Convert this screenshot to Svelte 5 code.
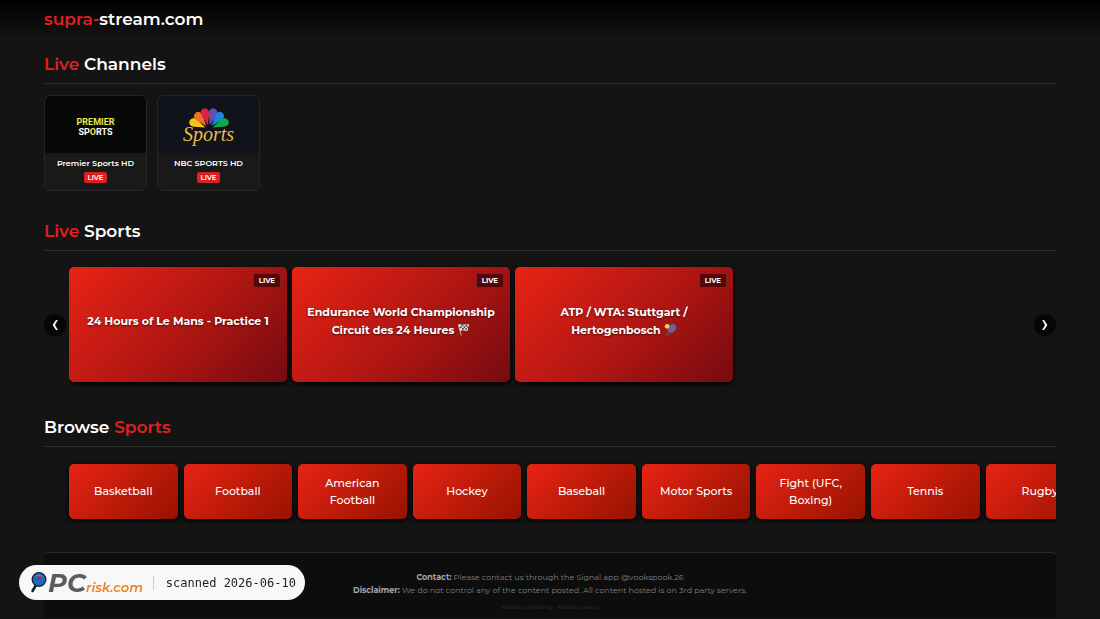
<script>
  const channels = [
    { name: 'Premier Sports HD', logo: 'premier' },
    { name: 'NBC SPORTS HD', logo: 'nbc' }
  ];

  const events = [
    { title: '24 Hours of Le Mans - Practice 1' },
    { title: 'Endurance World Championship Circuit des 24 Heures', icon: 'flag' },
    { title: 'ATP / WTA: Stuttgart / Hertogenbosch', icon: 'tennis' }
  ];

  const sports = [
    'Basketball',
    'Football',
    'American Football',
    'Hockey',
    'Baseball',
    'Motor Sports',
    'Fight (UFC, Boxing)',
    'Tennis',
    'Rugby'
  ];

  // peacock feathers, left to right
  const feathers = [
    { color: '#fbc312', angle: -67 },
    { color: '#f37021', angle: -40 },
    { color: '#dc2145', angle: -14 },
    { color: '#6650b4', angle: 14 },
    { color: '#1a86d9', angle: 40 },
    { color: '#12a84c', angle: 67 }
  ];

  let track;

  function scroll(dir) {
    track.scrollBy({ left: dir * 223, behavior: 'smooth' });
  }
</script>

<header>
  <a class="brand" href="/"><span>supra-</span>stream.com</a>
</header>

<main>
  <section>
    <h2><span>Live</span> Channels</h2>
    <div class="channels">
      {#each channels as channel}
        <a class="channel" href="#{channel.logo}">
          <div class="logo {channel.logo}">
            {#if channel.logo === 'premier'}
              <span class="yellow">PREMIER</span>
              <span>SP<span class="yellow">O</span>RTS</span>
            {:else}
              <svg width="44" height="24" viewBox="0 0 44 24" aria-hidden="true">
                {#each feathers as f}
                  <path
                    d="M0-4 L-3.8-14.5 C-5-18.500-3-21 0-21 C3-21 5-18.500 3.8-14.500 Z"
                    fill={f.color}
                    transform="translate(22 22) rotate({f.angle})"
                  />
                {/each}
              </svg>
              <span class="script">Sports</span>
            {/if}
          </div>
          <span class="name">{channel.name}</span>
          <span class="pill">LIVE</span>
        </a>
      {/each}
    </div>
  </section>

  <section>
    <h2><span>Live</span> Sports</h2>
    <div class="carousel">
      <button class="arrow" aria-label="Previous" on:click={() => scroll(-1)}>
        <svg width="8" height="12" viewBox="0 0 8 12"><path d="M5 1h1.800L4 6l2.800 5H5L1.600 6z" fill="#fff" /></svg>
      </button>
      <div class="track live" bind:this={track}>
        {#each events as event}
          <a class="event" href="#live">
            <span class="tag">LIVE</span>
            <span class="title">
              {event.title}
              {#if event.icon === 'flag'}
                <svg width="13" height="13" viewBox="0 0 14 14" role="img" aria-label="Chequered flag">
                  <path d="M1.500 2l3 11" stroke="#c9b3a4" stroke-width="1" stroke-linecap="round" />
                  <path d="M1.500 2c3-2 5 1 11.500-1l-1.500 7C9 9.500 7 6.500 3.300 8.500z" fill="#f2f2f2" />
                  <path d="M4.500 1.300l2.300.4.2 1.900-2.200-.3zM9.200 2l2-.3-.2 2-2.100.2zM2.700 4l2.200-.7.3 2-2.200.7zM7 3.600l2 .3-.2 1.900-1.700-.4zM5.300 5.300l1.900.2.100 1.700-1.700.1zM8.900 5.800l2-.3-.3 1.900-1.900.1zM11 3.700l1.700-.3-.4 1.800-1.500.3z" fill="#444" />
                </svg>
              {:else if event.icon === 'tennis'}
                <svg width="13" height="13" viewBox="0 0 14 14" role="img" aria-label="Tennis racket">
                  <path d="M5.500 9l-3 4" stroke="#2f6d78" stroke-width="1.600" stroke-linecap="round" />
                  <ellipse cx="8.500" cy="6" rx="5.800" ry="4.300" transform="rotate(-48 8.500 6)" fill="#78587c" stroke="#523b63" />
                  <path d="M6 4l5 4M8 2l4 4M5 7l6-5M7 9l6-5" stroke="#9c7898" stroke-width=".4" />
                  <circle cx="3.400" cy="3.600" r="2.600" fill="#f0cf52" />
                </svg>
              {/if}
            </span>
          </a>
        {/each}
      </div>
      <button class="arrow" aria-label="Next" on:click={() => scroll(1)}>
        <svg width="8" height="12" viewBox="0 0 8 12"><path d="M3 1H1.200L4 6l-2.800 5H3L6.400 6z" fill="#fff" /></svg>
      </button>
    </div>
  </section>

  <section>
    <h2>Browse <span>Sports</span></h2>
    <div class="track browse">
      {#each sports as sport}
        <a class="sport" href="#sport">{sport}</a>
      {/each}
    </div>
  </section>

  <footer>
    <p><strong>Contact:</strong> Please contact us through the Signal app @vookspook.26</p>
    <p><strong>Disclaimer:</strong> We do not control any of the content posted. All content hosted is on 3rd party servers.</p>
    <p class="links"><a href="#gambling">Roblox gambling</a> · <a href="#casino">Roblox casino</a></p>
  </footer>
</main>

<div class="scan">
  <svg width="18" height="24" viewBox="0 0 18 24" aria-hidden="true">
    <path d="M6 14L2.500 20" stroke="#102030" stroke-width="2.600" stroke-linecap="round" />
    <circle cx="9" cy="8.500" r="6.800" fill="#1f68bc" stroke="#13233b" stroke-width="1.300" />
    <path d="M5 6c2-3 6-3 8 0-2-.6-5-.6-8 0z" fill="#5b8fd0" />
    <path d="M7 5l4 4M11 5l-3 4" stroke="#a02848" stroke-width="1.200" />
  </svg>
  <span class="pc">PC</span><span class="risk">risk.com</span>
  <span class="date">scanned 2026-06-10</span>
</div>

<style>
  :global(body) {
    background: #141414;
    color: #fff;
    font-family: Montserrat, Inter, sans-serif;
    overflow-x: hidden;
  }

  a {
    color: inherit;
    text-decoration: none;
  }

  header {
    display: flex;
    align-items: center;
    height: 38px;
    padding: 0 4%;
    background: linear-gradient(#000, #141414);
  }

  .brand {
    font-size: 17px;
    font-weight: 600;
    line-height: 24px;
  }

  .brand span,
  h2 span {
    color: #e02020;
  }

  main {
    padding: 14px 4% 0;
  }

  section {
    margin-bottom: 28px;
  }

  h2 {
    margin: 0;
    padding-bottom: 7px;
    border-bottom: 1px solid #2c2c2c;
    font-size: 17px;
    font-weight: 600;
    line-height: 24px;
  }

  .channels {
    display: flex;
    gap: 10px;
    padding-top: 11px;
  }

  .channel {
    display: flex;
    flex-direction: column;
    align-items: center;
    box-sizing: border-box;
    width: 103px;
    height: 96px;
    border: 1px solid #262626;
    border-radius: 6px;
    background: #191919;
    overflow: hidden;
  }

  .logo {
    display: flex;
    flex-direction: column;
    align-items: center;
    justify-content: center;
    box-sizing: border-box;
    width: 100%;
    height: 57px;
  }

  .premier {
    padding-top: 4px;
    background: #080808;
    font-family: Roboto, sans-serif;
    font-size: 9px;
    font-weight: 700;
    line-height: 10px;
  }

  .nbc {
    background: #11131a;
  }

  .yellow {
    color: #e9e84a;
  }

  .script {
    margin-top: -6px;
    color: #e9bd4c;
    font-family: "Liberation Serif", serif;
    font-size: 20px;
    font-style: italic;
    line-height: 18px;
    z-index: 1;
  }

  .name {
    margin-top: 4px;
    font-size: 8px;
    font-weight: 600;
    line-height: 12px;
  }

  .pill {
    margin-top: 3px;
    padding: 0 3px;
    border-radius: 2px;
    background: #dc1f1f;
    font-size: 7px;
    font-weight: 600;
    line-height: 11px;
  }

  .carousel {
    display: flex;
    align-items: center;
    gap: 3px;
  }

  .arrow {
    display: flex;
    align-items: center;
    justify-content: center;
    flex: none;
    width: 22px;
    height: 22px;
    margin-top: 11px;
    padding: 0;
    border: none;
    border-radius: 50%;
    background: #060606;
    cursor: pointer;
  }

  .track {
    display: flex;
    overflow: hidden;
    padding: 16px 0 5px;
  }

  .live {
    flex: 1;
    gap: 5px;
  }

  .event {
    display: flex;
    align-items: center;
    justify-content: center;
    flex: none;
    position: relative;
    box-sizing: border-box;
    width: 218px;
    height: 115px;
    padding: 0 12px 7px;
    border-radius: 5px;
    background: linear-gradient(135deg, #e82315, #b51713 50%, #760b10);
    box-shadow: 0 2px 5px #000;
    text-align: center;
  }

  .tag {
    position: absolute;
    top: 6px;
    right: 6px;
    padding: 0 5px;
    border: 1px solid #7c2226;
    border-radius: 2px;
    background: #54060b;
    font-size: 7px;
    font-weight: 700;
    line-height: 13px;
  }

  .title {
    font-size: 11px;
    font-weight: 700;
    line-height: 18px;
    text-shadow: 0 1px 2px rgba(0, 0, 0, 0.6);
  }

  .title svg {
    vertical-align: -2px;
    fill: none;
  }

  .browse {
    gap: 6px;
    padding-top: 17px;
    padding-left: 25px;
  }

  .sport {
    display: flex;
    align-items: center;
    justify-content: center;
    flex: none;
    box-sizing: border-box;
    width: 11%;
    height: 55px;
    padding: 0 16px;
    border-radius: 5px;
    background: linear-gradient(135deg, #e82315, #961300);
    box-shadow: 0 2px 5px #000;
    font-size: 11px;
    font-weight: 500;
    line-height: 17px;
    text-align: center;
  }

  footer {
    padding: 18px 16px 5px;
    border-top: 1px solid #2a2a2a;
    border-radius: 4px 4px 0 0;
    background: #0d0d0d;
    color: #808080;
    font-size: 8px;
    line-height: 13px;
    text-align: center;
  }

  footer p {
    margin: 0;
  }

  footer strong {
    color: #a5a5a5;
  }

  footer .links {
    margin-top: 4px;
    color: #333;
    font-size: 6px;
    line-height: 12px;
  }

  .scan {
    display: flex;
    align-items: center;
    position: fixed;
    bottom: 19px;
    left: 19px;
    box-sizing: border-box;
    height: 35px;
    padding: 0 9px 0 11px;
    border-radius: 18px;
    background: #f8f8f8;
    color: #222;
  }

  .pc {
    color: #5c5c5c;
    font-size: 26px;
    font-style: italic;
    font-weight: 700;
    line-height: 24px;
  }

  .risk {
    padding-top: 9px;
    color: #e98324;
    font-size: 13px;
    font-style: italic;
    font-weight: 600;
    line-height: 16px;
  }

  .date {
    margin-left: 10px;
    padding-left: 12px;
    border-left: 1px solid #ccc;
    font-family: "DejaVu Sans Mono", monospace;
    font-size: 12px;
    line-height: 14px;
  }
</style>
